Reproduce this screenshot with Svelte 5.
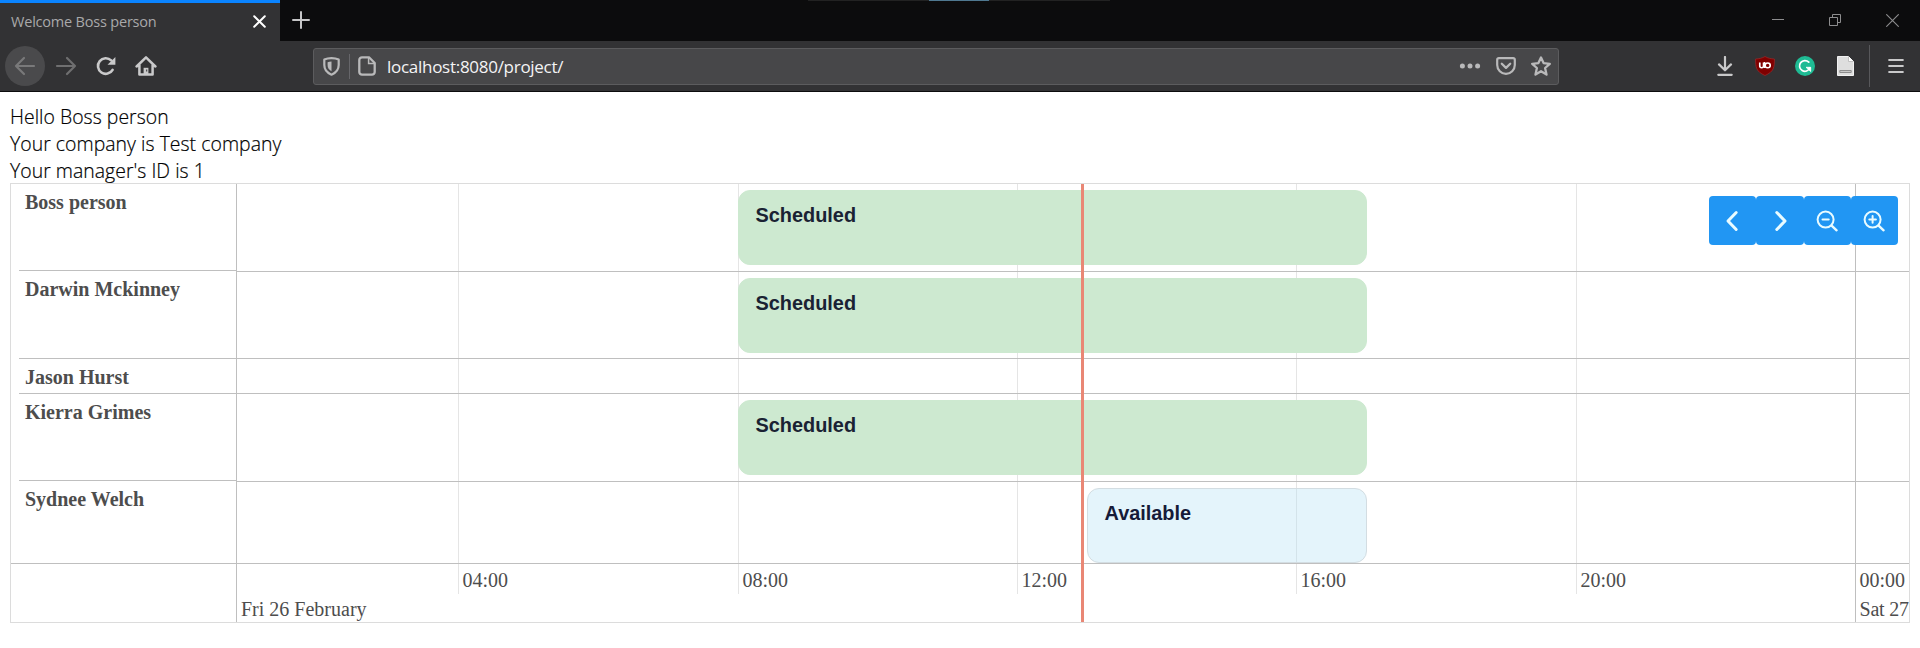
<script>
  const rows = [
    { name: 'Boss person', label: 87, track: 88, item: { text: 'Scheduled', kind: 'scheduled', start: 501, width: 629 } },
    { name: 'Darwin Mckinney', label: 88, track: 87, item: { text: 'Scheduled', kind: 'scheduled', start: 501, width: 629 } },
    { name: 'Jason Hurst', label: 35, track: 35, item: null },
    { name: 'Kierra Grimes', label: 87, track: 88, item: { text: 'Scheduled', kind: 'scheduled', start: 501, width: 629 } },
    { name: 'Sydnee Welch', label: 82, track: 81, item: { text: 'Available', kind: 'available', start: 850, width: 280 } }
  ];
  const hours = ['04:00', '08:00', '12:00', '16:00', '20:00', '00:00'];
</script>

<div class="browser">
  <div class="tabs">
    <div class="tab">
      <span class="tab-title">Welcome Boss person</span>
      <svg width="13" height="13" viewBox="0 0 13 13"><path d="M1.2 1.2l10.6 10.6M11.8 1.2L1.2 11.8" stroke="#fff" stroke-width="2" stroke-linecap="round" /></svg>
    </div>
    <div class="newtab">
      <svg width="18" height="18" viewBox="0 0 18 18"><path d="M9 1v16M1 9h16" stroke="#c6c6c7" stroke-width="2" stroke-linecap="round" /></svg>
    </div>
    <div class="handle"><span></span></div>
    <div class="wincontrols">
      <svg width="13" height="13" viewBox="0 0 13 13"><path d="M0 5.5h12" stroke="#8d8d8e" /></svg>
      <svg width="13" height="13" viewBox="0 0 13 13"><path d="M.5 3.5h8v8h-8zM3.5 3.5v-3h8v8h-3" fill="none" stroke="#8d8d8e" /></svg>
      <svg width="13" height="13" viewBox="0 0 13 13"><path d="M.3.3l12.4 12.4M12.7.3L.3 12.7" stroke="#8d8d8e" stroke-width="1.1" /></svg>
    </div>
  </div>

  <div class="toolbar">
    <div class="nav">
      <span class="back">
        <svg width="22" height="20" viewBox="0 0 22 20"><path d="M20 10H2M10 2L2 10l8 8" fill="none" stroke="#79797a" stroke-width="2.2" stroke-linecap="round" stroke-linejoin="round" /></svg>
      </span>
      <span>
        <svg width="22" height="20" viewBox="0 0 22 20"><path d="M2 10h18M12 2l8 8-8 8" fill="none" stroke="#6f6f70" stroke-width="2.2" stroke-linecap="round" stroke-linejoin="round" /></svg>
      </span>
      <span>
        <svg width="20" height="20" viewBox="0 0 20 20"><path d="M16.6 13.8A7.8 7.8 0 1 1 15.2 4.4" fill="none" stroke="#c9c9ca" stroke-width="2.6" stroke-linecap="round" /><path d="M19.4 1v7.8h-7.9z" fill="#c9c9ca" /></svg>
      </span>
      <span>
        <svg width="22" height="20" viewBox="0 0 22 20"><path d="M1.6 10.5L11 1.4l9.4 9.1M4.4 9v9.6h13.2V9" fill="none" stroke="#c9c9ca" stroke-width="2.5" stroke-linecap="round" stroke-linejoin="round" /><path d="M8.6 18.5v-6.7h4.8v6.7z" fill="#c9c9ca" /><path d="M11.2 13.5h1v2h-1z" fill="#323234" /></svg>
      </span>
    </div>

    <div class="urlbar">
      <svg width="17" height="19" viewBox="0 0 17 19"><path d="M8.5 1.2C6 1.2 3.5 1.6 1.3 2.6V8c0 4.800 2.700 7.800 7.200 9.700 4.500-1.900 7.200-4.900 7.200-9.700V2.600C13.500 1.600 11 1.200 8.500 1.200z" fill="none" stroke="#b9b9ba" stroke-width="2.2" stroke-linejoin="round" /><path d="M8.500 4.600c-1.500 0-2.700.2-3.900.6V8c0 3 1.300 4.900 3.900 6.200z" fill="#b9b9ba" /></svg>
      <i></i>
      <svg width="18" height="20" viewBox="0 0 18 20"><path d="M11 1.300H4A2.700 2.700 0 0 0 1.300 4v12A2.700 2.700 0 0 0 4 18.700h10A2.700 2.700 0 0 0 16.700 16V7z" fill="none" stroke="#b9b9ba" stroke-width="2.3" stroke-linejoin="round" /><path d="M10.600 2v5.400H16" fill="none" stroke="#b9b9ba" stroke-width="1.5" /></svg>
      <span class="url">localhost:8080/project/</span>
      <div class="urlactions">
        <svg width="22" height="20" viewBox="0 0 22 20"><g fill="#b9b9ba"><circle cx="3.4" cy="10" r="2.5" /><circle cx="11" cy="10" r="2.5" /><circle cx="18.6" cy="10" r="2.5" /></g></svg>
        <svg width="20" height="20" viewBox="0 0 20 20"><path d="M2.700 2.200h14.600a1.500 1.500 0 0 1 1.500 1.500V9a8.800 8.800 0 0 1-17.600 0V3.700a1.500 1.500 0 0 1 1.500-1.500z" fill="none" stroke="#b9b9ba" stroke-width="2.2" /><path d="M5.800 7.800L10 11.900l4.200-4.100" fill="none" stroke="#b9b9ba" stroke-width="2.3" stroke-linecap="round" stroke-linejoin="round" /></svg>
        <svg width="20" height="20" viewBox="0 0 20 20"><path d="M10 1.500l2.600 5.600 6.200.7-4.700 4.200 1.400 6.600-5.500-3.400-5.500 3.400L5.900 12 1.200 7.800l6.200-.7z" fill="none" stroke="#b9b9ba" stroke-width="2.3" stroke-linejoin="round" /></svg>
      </div>
    </div>

    <div class="extensions">
      <span>
        <svg width="16" height="20" viewBox="0 0 16 20"><path d="M8 1v12.700M2 8.400l6 5.900 6-5.900M1.300 18.800h13.400" fill="none" stroke="#c9c9ca" stroke-width="2.2" stroke-linecap="round" stroke-linejoin="round" /></svg>
      </span>
      <span>
        <svg width="20" height="20" viewBox="0 0 18 20" preserveAspectRatio="none"><path d="M9 .5c2.500 1.700 5.300 2.300 8.500 2.500 0 8.500-.5 12.500-8.500 16.500C1 15.500.5 11.500.5 3 3.700 2.800 6.500 2.200 9 .5z" fill="#800000" stroke="#a52a2a" stroke-width=".6" /><path d="M4.300 6.500v3.500a1.700 1.700 0 0 0 3.400 0V6.500" fill="none" stroke="#fff" stroke-width="1.500" /><path d="M8.600 6v6" stroke="#fff" stroke-width="1.400" /><circle cx="11.400" cy="9.400" r="2.300" fill="none" stroke="#fff" stroke-width="1.500" /></svg>
      </span>
      <span>
        <svg width="20" height="20" viewBox="0 0 20 20"><circle cx="10" cy="10" r="10" fill="#1fbb94" /><path d="M13.800 6.200A5.400 5.400 0 1 0 14.900 12" fill="none" stroke="#fff" stroke-width="1.700" stroke-linecap="round" /><path d="M11 11.300h4.700v4.200z" fill="#fff" stroke="#fff" stroke-width=".8" stroke-linejoin="round" /></svg>
      </span>
      <span>
        <svg width="17" height="20" viewBox="0 0 17 20"><path d="M.5.5h11l5 5v14H.5z" fill="#dedede" stroke="#f1f1f1" /><path d="M11.500.5v5h5" fill="#fff" stroke="#b5b5b5" stroke-width=".8" /><path d="M2.800 14.500h11.400v2H2.800z" fill="#c9c9c9" stroke="#858585" stroke-width=".9" /></svg>
      </span>
      <i></i>
      <svg width="16" height="16" viewBox="0 0 16 16"><path d="M1.200 2h13.600M1.200 8h13.600M1.200 14h13.600" stroke="#c9c9ca" stroke-width="2.2" stroke-linecap="round" /></svg>
    </div>
  </div>
</div>

<main>
  <div class="intro">
    <div>Hello Boss person</div>
    <div>Your company is Test company</div>
    <div>Your manager's ID is 1</div>
  </div>

  <div class="timeline">
    <div class="gridlines">
      {#each hours as hour, i (hour)}
        <b class:major={i === 5}></b>
      {/each}
    </div>
    <div class="upper">
      <div class="labels">
        {#each rows as row (row.name)}
          <div class="label" style="height: {row.label}px">{row.name}</div>
        {/each}
      </div>
      <div class="tracks">
        {#each rows as row (row.name)}
          <div class="track" style="height: {row.track}px">
            {#if row.item}
              <div class="item {row.item.kind}" style="margin-left: {row.item.start}px; width: {row.item.width}px">{row.item.text}</div>
            {/if}
          </div>
        {/each}
      </div>
    </div>
    <div class="axis">
      <div class="corner"></div>
      <div class="scale">
        <div class="hours">
          <span></span>
          {#each hours as hour (hour)}
            <span>{hour}</span>
          {/each}
        </div>
        <div class="days">
          <span>Fri 26 February</span>
          <span>Sat 27</span>
        </div>
      </div>
    </div>
    <div class="now"></div>
    <div class="controls">
      <button aria-label="Move left"><svg width="24" height="24" viewBox="0 0 24 24"><path d="M15.200 3.500L7 12l8.200 8.500" stroke-width="3" /></svg></button>
      <button aria-label="Move right"><svg width="24" height="24" viewBox="0 0 24 24"><path d="M8.800 3.500L17 12l-8.200 8.500" stroke-width="3" /></svg></button>
      <button aria-label="Zoom out"><svg width="24" height="24" viewBox="0 0 24 24"><circle cx="10.600" cy="10.600" r="8" stroke-width="2" /><path d="M16.600 16.600l5 4.700" stroke-width="2.400" /><path d="M7.500 10.400h6.200" stroke-width="2" /></svg></button>
      <button aria-label="Zoom in"><svg width="24" height="24" viewBox="0 0 24 24"><circle cx="10.600" cy="10.600" r="8" stroke-width="2" /><path d="M16.600 16.600l5 4.700" stroke-width="2.400" /><path d="M7.300 10.400h6.600M10.600 7.100v6.600" stroke-width="2" /></svg></button>
    </div>
  </div>
</main>

<style>
  :global(body) {
    background: #fff;
    overflow: hidden;
  }
  svg {
    display: block;
    flex: none;
  }
  .browser {
    font-family: 'Open Sans', 'Noto Sans', sans-serif;
    height: 92px;
    box-sizing: border-box;
    background: #323234;
    border-bottom: 1px solid #0c0c0d;
  }
  .tabs {
    display: flex;
    height: 41px;
    background: #0c0c0d;
  }
  .tab {
    box-sizing: border-box;
    width: 280px;
    height: 41px;
    border-top: 3px solid #0a84ff;
    background: #323234;
    display: flex;
    align-items: center;
    justify-content: space-between;
    padding: 0 14px 2px 11px;
  }
  .tab-title {
    font-size: 14.5px;
    letter-spacing: -0.2px;
    color: #a9a9aa;
    white-space: nowrap;
  }
  .newtab {
    width: 42px;
    display: flex;
    align-items: center;
    justify-content: center;
    padding-bottom: 1px;
  }
  .handle {
    width: 302px;
    height: 1px;
    margin-left: 486px;
    background: #222;
    display: flex;
    justify-content: center;
  }
  .handle span {
    width: 60px;
    background: #4f7890;
  }
  .wincontrols {
    margin-left: auto;
    display: flex;
    gap: 44px;
    padding: 14px 21px 0 0;
  }
  .toolbar {
    display: flex;
    height: 50px;
    align-items: center;
  }
  .nav {
    display: flex;
    width: 313px;
    padding-left: 5px;
    box-sizing: border-box;
  }
  .nav span,
  .extensions span {
    width: 40px;
    height: 40px;
    display: flex;
    align-items: center;
    justify-content: center;
  }
  .nav .back {
    border-radius: 50%;
    background: #4a4a4c;
    margin-right: 1px;
  }
  .urlbar {
    box-sizing: border-box;
    width: 1246px;
    height: 37px;
    border: 1px solid #5c5c5e;
    border-radius: 3px;
    background: #474749;
    display: flex;
    align-items: center;
    padding: 0 7px 0 9px;
  }
  .urlbar i {
    width: 1px;
    height: 25px;
    margin: 0 8px 0 9px;
    background: #66666a;
  }
  .url {
    margin-left: 11px;
    padding-top: 1px;
    font-size: 17px;
    letter-spacing: -0.28px;
    color: #f4f4f5;
    white-space: nowrap;
  }
  .urlactions {
    margin-left: auto;
    display: flex;
    gap: 15px;
  }
  .extensions {
    display: flex;
    align-items: center;
    margin-left: 146px;
  }
  .extensions i {
    width: 1px;
    height: 42px;
    margin: 0 18px 0 4px;
    background: #58585b;
  }
  main {
    padding: 11px 10px 0;
  }
  .intro {
    font-family: 'Open Sans', 'Noto Sans', sans-serif;
    font-weight: 300;
    font-size: 19.4px;
    letter-spacing: 0.04px;
    line-height: 27px;
    height: 80px;
    color: #000;
    -webkit-text-stroke: 0.2px #000;
    white-space: nowrap;
  }
  .timeline {
    position: relative;
    box-sizing: border-box;
    height: 440px;
    border: 1px solid #dcdcdc;
    overflow: hidden;
    font-family: 'Liberation Serif', serif;
    font-size: 20px;
    color: #4d4d4d;
  }
  .gridlines {
    position: absolute;
    inset: 0 0 0 226px;
    display: grid;
    grid-template-columns: 280px 279px 279px 280px 279px 54px;
    padding-left: 221px;
  }
  .gridlines b {
    height: 410px;
    border-left: 1px solid #e5e5e5;
  }
  .gridlines b.major {
    height: 438px;
    border-color: #bfbfbf;
  }
  .upper,
  .axis {
    position: relative;
    display: flex;
  }
  .labels {
    box-sizing: border-box;
    width: 226px;
    height: 379px;
    border-right: 1px solid #bfbfbf;
    padding-left: 8px;
    font-weight: bold;
  }
  .label {
    box-sizing: border-box;
    border-bottom: 1px solid #bfbfbf;
    padding: 7px 0 0 6px;
    line-height: 23px;
    white-space: nowrap;
  }
  .tracks {
    flex: 1;
    height: 379px;
  }
  .track {
    box-sizing: border-box;
    border-bottom: 1px solid #bfbfbf;
    padding-top: 6px;
  }
  .label:last-child,
  .track:last-child {
    border-bottom: 0;
  }
  .item {
    box-sizing: border-box;
    height: 75px;
    border: 1px solid #cde9d0;
    border-radius: 12px;
    padding: 12px 16.5px;
    font: bold 19.9px/24px 'Liberation Sans', Arial, sans-serif;
    color: #1a2233;
  }
  .scheduled {
    background: #cde9d0;
  }
  .available {
    background: rgba(179, 224, 245, 0.36);
    border-color: #d3dde2;
    color: #161a38;
  }
  .axis {
    box-sizing: border-box;
    height: 59px;
    border-top: 1px solid #bfbfbf;
  }
  .corner {
    box-sizing: border-box;
    width: 226px;
    border-right: 1px solid #bfbfbf;
  }
  .scale {
    flex: 1;
    min-width: 0;
    white-space: nowrap;
  }
  .hours {
    display: grid;
    grid-template-columns: 221px 280px 279px 279px 280px 279px 54px;
    height: 30px;
    line-height: 32px;
  }
  .hours span {
    padding-left: 4.5px;
  }
  .days {
    display: grid;
    grid-template-columns: 1618px 54px;
    line-height: 31px;
    height: 28px;
  }
  .days span {
    padding-left: 4px;
  }
  .days span + span {
    padding-left: 4.5px;
    letter-spacing: -0.2px;
  }
  .now {
    position: absolute;
    left: 1070px;
    top: 0;
    bottom: 0;
    width: 3px;
    background: #e98775;
  }
  .controls {
    position: absolute;
    top: 12px;
    right: 11px;
    display: flex;
  }
  button {
    width: 47.25px;
    height: 49px;
    border: 0;
    padding: 0;
    border-radius: 4px;
    background: #2196f3;
    display: flex;
    align-items: center;
    justify-content: center;
  }
  button path,
  button circle {
    fill: none;
    stroke: #e9fbff;
    stroke-linecap: round;
    stroke-linejoin: round;
  }
</style>
